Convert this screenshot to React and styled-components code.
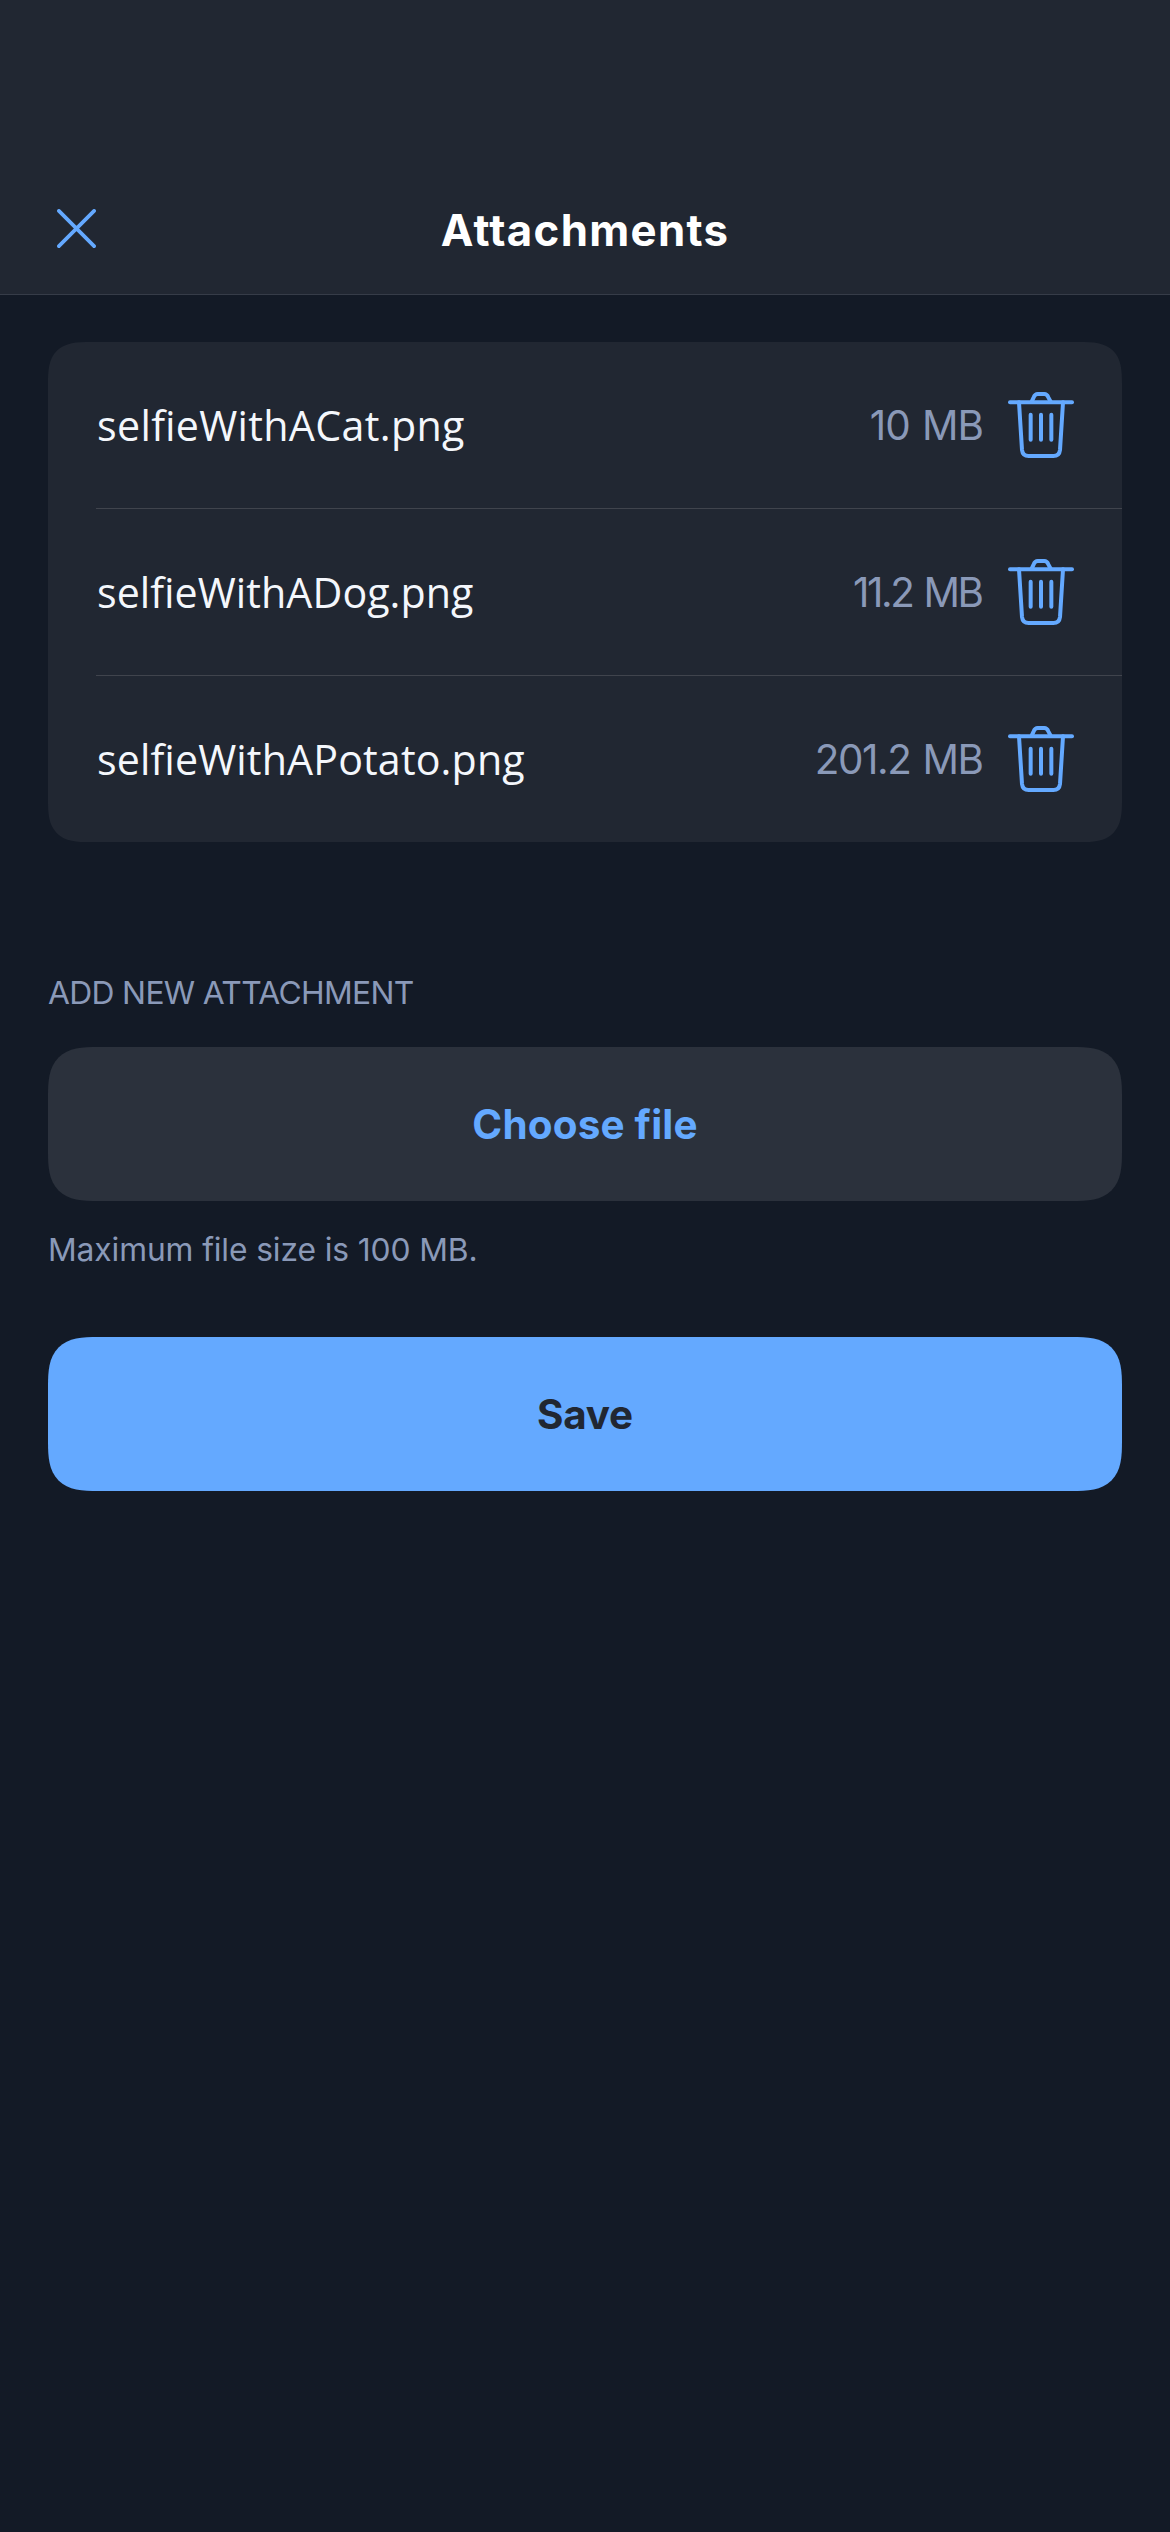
import React from 'react';
import styled, { createGlobalStyle } from 'styled-components';

const GlobalStyle = createGlobalStyle`
  *, *::before, *::after { box-sizing: border-box; }
  body {
    margin: 0;
    background: #131a26;
    font-family: Inter, "Open Sans", sans-serif;
  }
  button { font: inherit; border: 0; padding: 0; background: none; cursor: pointer; }
`;

const Screen = styled.main`
  min-height: 2532px;
  background: #131a26;
`;

const Header = styled.header`
  display: grid;
  grid-template-columns: 117px 1fr 117px;
  align-items: center;
  height: 295px;
  padding: 162px 0 0;
  border-bottom: 1px solid #363c48;
  background: #212732;
`;

const CloseButton = styled.button`
  display: flex;
  margin-left: 57px;
  width: 39px;
  color: #64a9ff;
`;

const Title = styled.h1`
  margin: 6px 0 0;
  color: #fff;
  font-size: 43.8px;
  font-weight: 700;
  line-height: 56px;
  letter-spacing: ${(p) => p.$tracking}px;
  text-align: center;
`;

const Content = styled.div`
  display: flex;
  flex-direction: column;
  padding: 47px 48px 0;
`;

const FileList = styled.ul`
  list-style: none;
  margin: 0;
  padding: 0 0 0 48px;
  border-radius: 30px;
  background: #212732;
  @supports (corner-shape: superellipse(1.5)) {
    border-radius: 42px;
    corner-shape: superellipse(1.55);
  }
`;

const FileRow = styled.li`
  display: flex;
  align-items: center;
  height: 167px;
  padding-right: 48px;
  border-bottom: 1px solid #40444d;
  &:last-child { height: 166px; border-bottom: 0; }
`;

const FileName = styled.span`
  flex: 1;
  padding-left: 1px;
  padding-bottom: 1px;
  color: #f4f7fc;
  font-family: "Open Sans", sans-serif;
  font-size: 41.2px;
  font-weight: 400;
  line-height: 56px;
  letter-spacing: ${(p) => p.$tracking}px;
  font-feature-settings: "liga" 1;
`;

const FileSize = styled.span`
  margin-right: ${(p) => 24 - p.$tracking}px;
  padding-top: 1px;
  color: #8a99b8;
  font-size: 40.4px;
  font-weight: 400;
  line-height: 56px;
  letter-spacing: ${(p) => p.$tracking}px;
  word-spacing: 2px;
`;

const DeleteButton = styled.button`
  display: flex;
  color: #64a9ff;
`;

const SectionLabel = styled.h2`
  margin: 131px 0 34px;
  color: #8a99b8;
  font-size: 31.8px;
  font-weight: 400;
  line-height: 40px;
  letter-spacing: ${(p) => p.$tracking}px;
`;

const ActionButton = styled.button`
  height: 154px;
  padding-top: 2px;
  border-radius: 36px;
  background: ${(p) => (p.$primary ? '#64a9ff' : '#2b313c')};
  color: ${(p) => (p.$primary ? '#212732' : '#64a9ff')};
  @supports (corner-shape: superellipse(1.5)) {
    border-radius: 50px;
    corner-shape: superellipse(1.55);
  }
`;

const ButtonText = styled.span`
  font-size: 40.4px;
  font-weight: 650;
  line-height: 56px;
  letter-spacing: ${(p) => p.$tracking}px;
`;

const Hint = styled.p`
  margin: 29px 0 67px;
  color: #8a99b8;
  font-size: 31.8px;
  font-weight: 400;
  line-height: 40px;
  letter-spacing: ${(p) => p.$tracking}px;
`;

const CloseIcon = () => (
  <svg width="39" height="39" viewBox="0 0 39 39" fill="none" stroke="currentColor" strokeWidth="3.7" strokeLinecap="round">
    <path d="M1.9 1.9 37.1 37.1M37.1 1.9 1.9 37.1" />
  </svg>
);

const TrashIcon = () => (
  <svg width="66" height="66" viewBox="0 0 198 198" fill="none" stroke="currentColor" strokeWidth="12" strokeLinecap="round" strokeLinejoin="round">
    <path d="M6 31H192" />
    <path d="M71 29 77 16Q81 6 89 6H109Q117 6 121 16L128 29" />
    <path d="M33 31 42 174Q44 192 62 192H136Q154 192 156 174L165 31" />
    <path d="M68 68V143M99 68V143M130 68V143" />
  </svg>
);

const files = [
  { name: 'selfieWithACat.png', size: '10 MB', nameTracking: 0.33, sizeTracking: -1 },
  { name: 'selfieWithADog.png', size: '11.2 MB', nameTracking: 0.05, sizeTracking: -2.4 },
  { name: 'selfieWithAPotato.png', size: '201.2 MB', nameTracking: 0.13, sizeTracking: -1.4 },
];

export default function App() {
  return (
    <>
      <GlobalStyle />
      <Screen>
        <Header>
          <CloseButton aria-label="Close"><CloseIcon /></CloseButton>
          <Title $tracking={1.3}>Attachments</Title>
        </Header>
        <Content>
          <FileList>
            {files.map((file) => (
              <FileRow key={file.name}>
                <FileName $tracking={file.nameTracking}>{file.name}</FileName>
                <FileSize $tracking={file.sizeTracking}>{file.size}</FileSize>
                <DeleteButton aria-label={`Delete ${file.name}`}><TrashIcon /></DeleteButton>
              </FileRow>
            ))}
          </FileList>
          <SectionLabel $tracking={-0.67}>ADD NEW ATTACHMENT</SectionLabel>
          <ActionButton><ButtonText $tracking={0.2}>Choose file</ButtonText></ActionButton>
          <Hint $tracking={-0.12}>Maximum file size is 100 MB.</Hint>
          <ActionButton $primary><ButtonText $tracking={-0.2}>Save</ButtonText></ActionButton>
        </Content>
      </Screen>
    </>
  );
}
